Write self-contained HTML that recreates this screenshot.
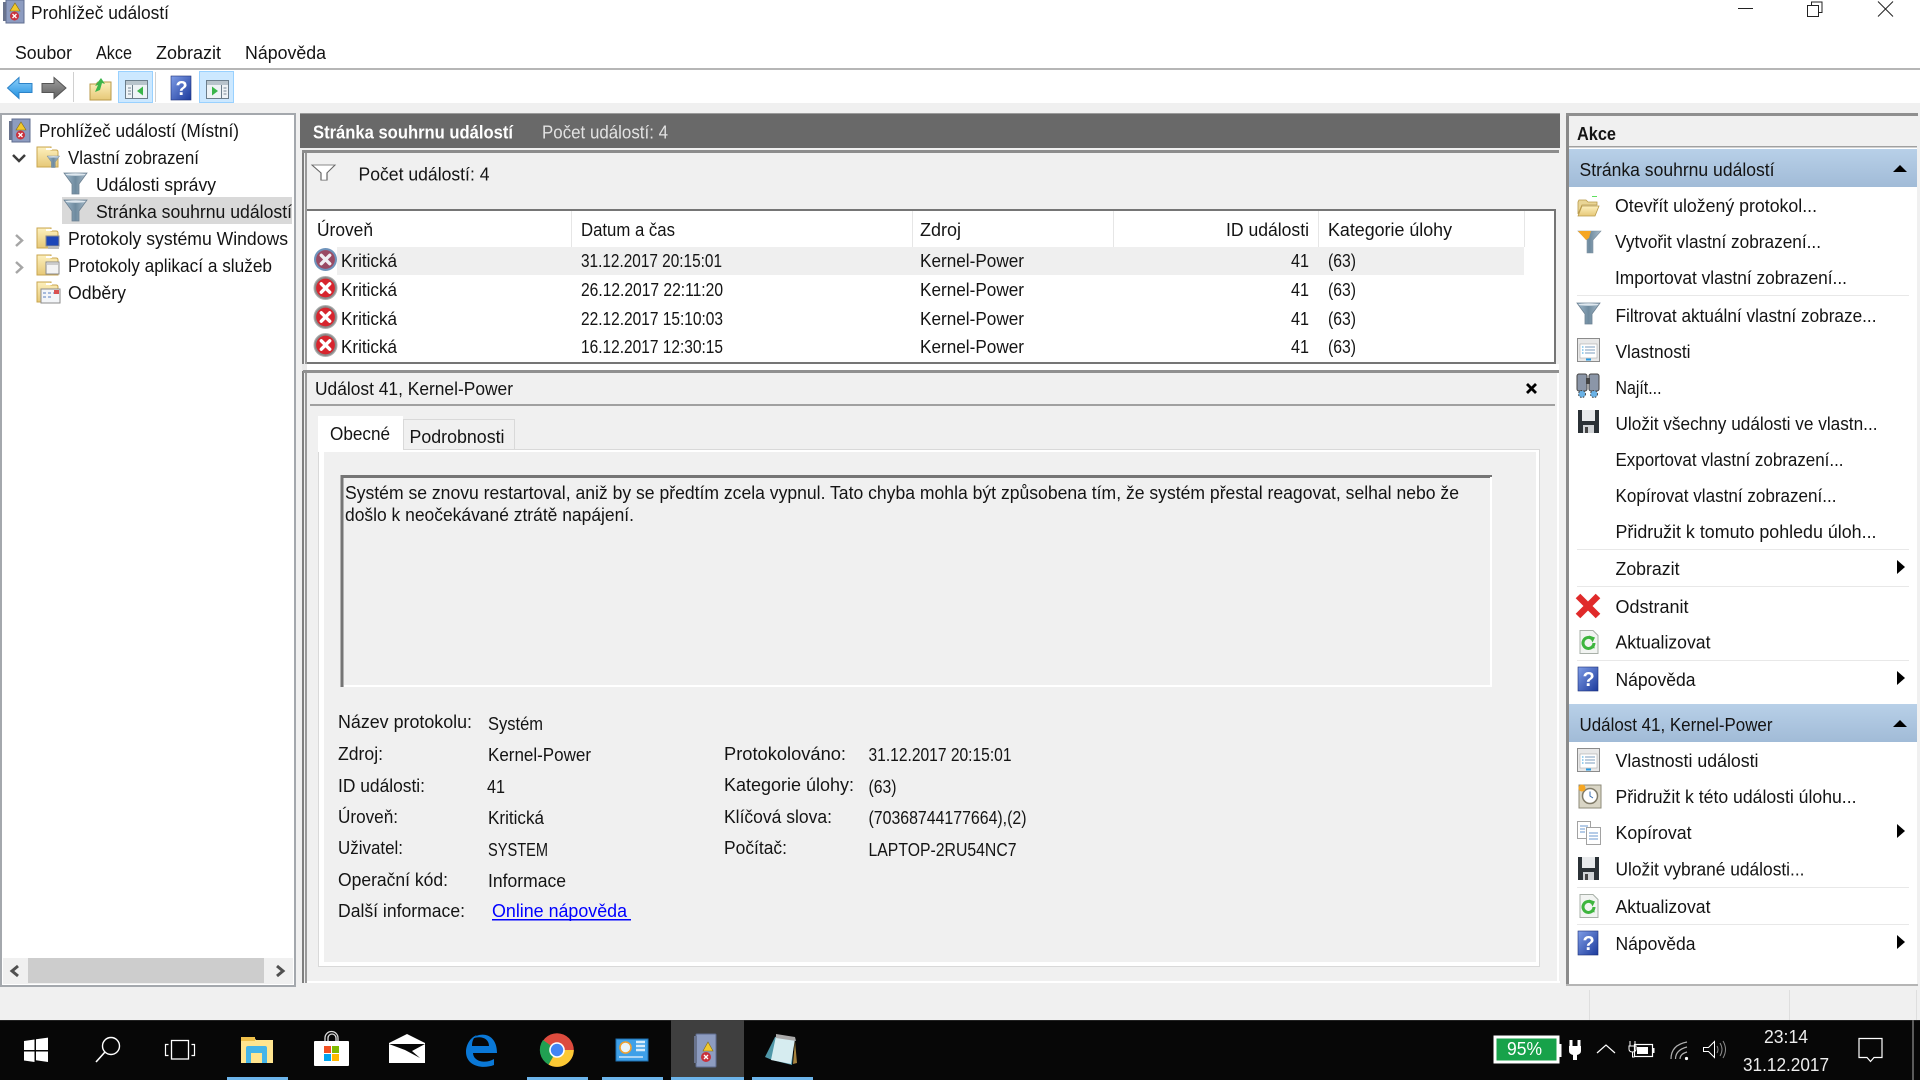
<!DOCTYPE html>
<html lang="cs"><head><meta charset="utf-8"><title>Prohlížeč událostí</title>
<style>
html,body{margin:0;padding:0;background:#f0f0f0;overflow:hidden}
svg{display:block}
text{font-family:"Liberation Sans",sans-serif;font-size:18px;fill:#141414}
.b{font-weight:700}
.w{fill:#fff}
</style></head><body>
<svg xmlns="http://www.w3.org/2000/svg" width="1920" height="1080" viewBox="0 0 1920 1080">
<defs>
<linearGradient id="sec" x1="0" y1="0" x2="0" y2="1"><stop offset="0" stop-color="#b8d0e8"/><stop offset="1" stop-color="#a1bbd7"/></linearGradient>
<linearGradient id="fol" x1="0" y1="0" x2="0" y2="1"><stop offset="0" stop-color="#fdf0bd"/><stop offset="1" stop-color="#e6c877"/></linearGradient>
<linearGradient id="fun" x1="0" y1="0" x2="1" y2="0"><stop offset="0" stop-color="#9fb9cc"/><stop offset=".5" stop-color="#6f8b9f"/><stop offset="1" stop-color="#a8bccb"/></linearGradient>
<linearGradient id="hlp" x1="0" y1="0" x2="1" y2="1"><stop offset="0" stop-color="#7f9de6"/><stop offset="1" stop-color="#1c3a9c"/></linearGradient>
<linearGradient id="arrB" x1="0" y1="0" x2="0" y2="1"><stop offset="0" stop-color="#8fd0fa"/><stop offset="1" stop-color="#1f8fe0"/></linearGradient>
<linearGradient id="arrG" x1="0" y1="0" x2="0" y2="1"><stop offset="0" stop-color="#a0a0a0"/><stop offset="1" stop-color="#5e5e5e"/></linearGradient>
<g id="ev"><rect x="3" y="0" width="18" height="23" fill="#8d9cc0" stroke="#5f6d8f"/><rect x="0" y="2" width="3" height="19" fill="#69738d"/><path d="M12 3l5 8H7z" fill="#f2c92c" stroke="#866d10" stroke-width=".6"/><circle cx="11.500" cy="16" r="4.500" fill="#c9313c"/><path d="M9.500 14l4 4m0-4l-4 4" stroke="#fff" stroke-width="1.300"/></g>
<g id="folder"><path d="M0 4V1h14v3h5q2 0 2 2v15H0z" fill="url(#fol)" stroke="#c9a64f"/><rect x="9" y="2" width="6" height="2" fill="#fff"/></g>
<g id="funnel"><path d="M0 0h23l-8 11v10H8V11z" fill="url(#fun)" stroke="#6d8192" stroke-width=".8"/><ellipse cx="11.500" cy="1.500" rx="10" ry="1.300" fill="#dfe8ef"/></g>
<g id="crit"><circle r="11.500" fill="#8a8a8a"/><circle r="11.500" fill="none" stroke="#b0b0b0" stroke-width="1"/><circle r="9.400" fill="#d7252e"/><path d="M-4.200-4.200L4.200 4.200M4.200-4.200L-4.200 4.200" stroke="#fff" stroke-width="3.400" stroke-linecap="round"/></g>
<g id="critS"><circle r="11.500" fill="#6f93bb"/><circle r="9.400" fill="#9a4a63"/><path d="M-4.200-4.200L4.200 4.200M4.200-4.200L-4.200 4.200" stroke="#f0eef2" stroke-width="3.400" stroke-linecap="round"/></g>
<g id="help"><rect width="20" height="24" fill="url(#hlp)" stroke="#1c2f78" stroke-width=".6"/><text x="4.500" y="19" class="b" style="font-size:20px;fill:#fff">?</text></g>
<g id="save"><path d="M0 0h21v23H0z" fill="#2b3136"/><rect x="4" y="0" width="13" height="11" fill="#e8eaec"/><rect x="5" y="15" width="11" height="8" fill="#d0d3d6"/><rect x="7" y="17" width="3" height="6" fill="#444"/></g>
<g id="props"><rect x=".5" y=".5" width="22" height="23" fill="#e8e8e8" stroke="#8b8b8b"/><rect x="3" y="6" width="17" height="14" fill="#fff" stroke="#aaa" stroke-width=".6"/><path d="M8 9h10M8 12h10M8 15h10" stroke="#7c9cbc"/><path d="M5 9h1.500M5 12h1.500M5 15h1.500" stroke="#32a0e0"/><rect x="9" y="20.500" width="5" height="2" fill="#2a9ae0"/></g>
<g id="refresh"><path d="M.5.5h13l5 5v18H.5z" fill="#f2f4f2" stroke="#a8b0a8"/><path d="M14.500 13a5.500 5.500 0 1 1-2-4.300" fill="none" stroke="#3eb53e" stroke-width="3"/><path d="M10.500 5.500l6 2-2.500 5z" fill="#3eb53e" transform="translate(-1 0)"/><path d="M10 17l5 1.500v-4.500z" fill="#3eb53e"/></g>
<path id="tri" d="M0 7L7 0l7 7z" fill="#000"/>
<path id="ar" d="M0 0l8 7-8 7z" fill="#000"/>
</defs>

<rect width="1920" height="1080" fill="#f0f0f0"/>
<!-- title / menu / toolbar -->
<rect width="1920" height="68" fill="#fff"/>
<rect y="68" width="1920" height="2" fill="#b6b6b6"/>
<rect y="70" width="1920" height="33" fill="#fff"/>
<use href="#ev" x="3" y="0"/>
<text x="31" y="19" textLength="138" lengthAdjust="spacingAndGlyphs">Prohlížeč událostí</text>
<path d="M1738 8.500h15" stroke="#222" stroke-width="1"/>
<path d="M1807.500 5.500h11v11h-11zM1811.500 5.500v-3.500h10.500v10.500h-3.500" fill="none" stroke="#222"/>
<path d="M1878 1.500l15 15M1893 1.500l-15 15" stroke="#222" stroke-width="1"/>
<text x="15" y="59" textLength="57" lengthAdjust="spacingAndGlyphs">Soubor</text>
<text x="96" y="59" textLength="36" lengthAdjust="spacingAndGlyphs">Akce</text>
<text x="156" y="59" textLength="65" lengthAdjust="spacingAndGlyphs">Zobrazit</text>
<text x="245" y="59" textLength="81" lengthAdjust="spacingAndGlyphs">Nápověda</text>

<path d="M7.500 88L19 77.500v6h13v9H19v6z" fill="url(#arrB)" stroke="#2d83c8"/>
<path d="M66 88L54 77.500v6H42v9h12v6z" fill="url(#arrG)" stroke="#555"/>
<rect x="73" y="72" width="1" height="30" fill="#d0d0d0"/>
<rect x="155" y="72" width="1" height="30" fill="#d0d0d0"/>
<path d="M90 84h6l2-2h13v18H90z" fill="url(#fol)" stroke="#b99a4a"/>
<path d="M95 92l3-7-3 1 6-8 4 6-3-1-2 7z" fill="#3bb54a"/>
<rect x="118.500" y="71.500" width="34" height="31" fill="#cce8ff" stroke="#99d1ff"/>
<rect x="125.500" y="80.500" width="22" height="18" fill="#eef3f6" stroke="#6b7d8a"/><rect x="126" y="81" width="21" height="4" fill="#b8c4cc"/><path d="M132.500 85v13" stroke="#6b7d8a"/><path d="M143 86.500v9l-6-4.500z" fill="#3ab54a"/><path d="M128 88h3M128 91h3M128 94h3" stroke="#7a8a96"/>
<use href="#help" x="171" y="76"/>
<rect x="199.500" y="71.500" width="34" height="31" fill="#cce8ff" stroke="#99d1ff"/>
<rect x="206.500" y="80.500" width="22" height="18" fill="#eef3f6" stroke="#6b7d8a"/><rect x="207" y="81" width="21" height="4" fill="#b8c4cc"/><path d="M221.500 85v13" stroke="#6b7d8a"/><path d="M212 86.500v9l6-4.500z" fill="#3ab54a"/><path d="M223.500 88h3M223.500 91h3M223.500 94h3" stroke="#7a8a96"/>

<!-- left panel -->
<rect x="1" y="114" width="294" height="872" fill="#fff" stroke="#a4a8ad" stroke-width="2"/>
<use href="#ev" x="9" y="119"/>
<text x="39" y="137" textLength="200" lengthAdjust="spacingAndGlyphs">Prohlížeč událostí (Místní)</text>
<path d="M13 155l6 6 6-6" fill="none" stroke="#3c3c3c" stroke-width="2.500"/>
<use href="#folder" x="37" y="146"/>
<g transform="translate(47,156) scale(.55)"><use href="#funnel"/></g>
<text x="68" y="164" textLength="131" lengthAdjust="spacingAndGlyphs">Vlastní zobrazení</text>
<use href="#funnel" x="64" y="173"/>
<text x="96" y="191" textLength="120" lengthAdjust="spacingAndGlyphs">Události správy</text>
<rect x="62" y="197" width="230" height="27" fill="#d9d9d9"/>
<use href="#funnel" x="64" y="200"/>
<text x="96" y="218" textLength="196" lengthAdjust="spacingAndGlyphs">Stránka souhrnu událostí</text>
<path d="M16 235l6 5.500-6 5.500" fill="none" stroke="#a6a6a6" stroke-width="2.500"/>
<use href="#folder" x="37" y="227"/>
<rect x="46" y="236" width="13" height="10" fill="#1d46b8" stroke="#8b8b8b"/><rect x="48" y="246" width="11" height="3" fill="#bbb"/>
<text x="68" y="245" textLength="220" lengthAdjust="spacingAndGlyphs">Protokoly systému Windows</text>
<path d="M16 262l6 5.500-6 5.500" fill="none" stroke="#a6a6a6" stroke-width="2.500"/>
<use href="#folder" x="37" y="254"/>
<rect x="46" y="262" width="13" height="12" fill="#f3f3f3" stroke="#8b8b8b"/><rect x="47" y="263" width="11" height="2" fill="#ccc"/>
<text x="68" y="272" textLength="204" lengthAdjust="spacingAndGlyphs">Protokoly aplikací a služeb</text>
<use href="#folder" x="37" y="281"/>
<rect x="41" y="289" width="19" height="14" fill="#f3f5f8" stroke="#8b8b8b"/><path d="M43 293h3M48 293h3M53 293h3M43 297h3M48 297h3" stroke="#5a7ec0"/><rect x="54" y="290" width="5" height="4" fill="#d95050"/>
<text x="68" y="299" textLength="58" lengthAdjust="spacingAndGlyphs">Odběry</text>
<rect x="3" y="958" width="290" height="26" fill="#f0f0f0"/>
<rect x="28" y="958" width="236" height="25" fill="#cdcdcd"/>
<path d="M18 966l-6 5 6 5" fill="none" stroke="#505050" stroke-width="3"/>
<path d="M277 966l6 5-6 5" fill="none" stroke="#505050" stroke-width="3"/>

<!-- center header -->
<rect x="300" y="113" width="1260" height="35" fill="#696969"/>
<rect x="300" y="113" width="1260" height="1" fill="#9a9a9a"/>
<text x="313" y="138.500" textLength="200" lengthAdjust="spacingAndGlyphs" class="b" style="fill:#fff">Stránka souhrnu událostí</text>
<text x="542" y="138.500" textLength="126" lengthAdjust="spacingAndGlyphs" style="fill:#e2e2e2">Počet událostí: 4</text>

<!-- center frames -->
<rect x="302" y="150" width="2" height="833" fill="#7e7e7e"/>
<rect x="305" y="150" width="2" height="833" fill="#9a9a9a"/>
<rect x="302" y="150" width="1257" height="3" fill="#8c8c8c"/>
<rect x="307" y="153" width="1249" height="56" fill="#f0f0f0"/>
<g transform="translate(312,165) scale(1,.72)"><path d="M0 0h23l-8 11v10H9V11z" fill="#fff" stroke="#666" stroke-width="1.200"/></g>
<text x="358.500" y="180.500" textLength="131" lengthAdjust="spacingAndGlyphs">Počet událostí: 4</text>
<rect x="307" y="209" width="1249" height="2" fill="#757575"/>
<rect x="1554" y="209" width="2" height="155" fill="#757575"/>
<rect x="307" y="211" width="1247" height="151" fill="#fff"/>
<path d="M571.500 211v36M912.500 211v36M1113.500 211v36M1318.500 211v36M1524.500 211v36" stroke="#e6e6e6"/>
<text x="317" y="236" textLength="56" lengthAdjust="spacingAndGlyphs">Úroveň</text>
<text x="581" y="236" textLength="94" lengthAdjust="spacingAndGlyphs">Datum a čas</text>
<text x="920" y="236" textLength="41" lengthAdjust="spacingAndGlyphs">Zdroj</text>
<text x="1226" y="236" textLength="83" lengthAdjust="spacingAndGlyphs">ID události</text>
<text x="1328" y="236" textLength="124" lengthAdjust="spacingAndGlyphs">Kategorie úlohy</text>
<rect x="337" y="247" width="1187" height="28" fill="#efefef"/>
<use href="#critS" x="325.500" y="259.500"/><use href="#crit" x="325.500" y="288"/><use href="#crit" x="325.500" y="317"/><use href="#crit" x="325.500" y="345"/>
<text x="341" y="267" textLength="56" lengthAdjust="spacingAndGlyphs">Kritická</text>
<text x="581" y="267" textLength="141" lengthAdjust="spacingAndGlyphs">31.12.2017 20:15:01</text>
<text x="920" y="267" textLength="104" lengthAdjust="spacingAndGlyphs">Kernel-Power</text>
<text x="1291" y="267" textLength="18" lengthAdjust="spacingAndGlyphs">41</text>
<text x="1328" y="267" textLength="28" lengthAdjust="spacingAndGlyphs">(63)</text>
<text x="341" y="296" textLength="56" lengthAdjust="spacingAndGlyphs">Kritická</text>
<text x="581" y="296" textLength="142" lengthAdjust="spacingAndGlyphs">26.12.2017 22:11:20</text>
<text x="920" y="296" textLength="104" lengthAdjust="spacingAndGlyphs">Kernel-Power</text>
<text x="1291" y="296" textLength="18" lengthAdjust="spacingAndGlyphs">41</text>
<text x="1328" y="296" textLength="28" lengthAdjust="spacingAndGlyphs">(63)</text>
<text x="341" y="325" textLength="56" lengthAdjust="spacingAndGlyphs">Kritická</text>
<text x="581" y="325" textLength="142" lengthAdjust="spacingAndGlyphs">22.12.2017 15:10:03</text>
<text x="920" y="325" textLength="104" lengthAdjust="spacingAndGlyphs">Kernel-Power</text>
<text x="1291" y="325" textLength="18" lengthAdjust="spacingAndGlyphs">41</text>
<text x="1328" y="325" textLength="28" lengthAdjust="spacingAndGlyphs">(63)</text>
<text x="341" y="353" textLength="56" lengthAdjust="spacingAndGlyphs">Kritická</text>
<text x="581" y="353" textLength="142" lengthAdjust="spacingAndGlyphs">16.12.2017 12:30:15</text>
<text x="920" y="353" textLength="104" lengthAdjust="spacingAndGlyphs">Kernel-Power</text>
<text x="1291" y="353" textLength="18" lengthAdjust="spacingAndGlyphs">41</text>
<text x="1328" y="353" textLength="28" lengthAdjust="spacingAndGlyphs">(63)</text>
<rect x="307" y="362" width="1249" height="2" fill="#757575"/>
<rect x="302" y="364" width="1257" height="6" fill="#fff"/>
<rect x="302" y="364" width="5" height="7" fill="#e8e8e8"/>
<rect x="303" y="370" width="1256" height="3" fill="#909090"/>

<!-- detail -->
<text x="315" y="395" textLength="198" lengthAdjust="spacingAndGlyphs">Událost 41, Kernel-Power</text>
<path d="M1527 384l9 9M1536 384l-9 9" stroke="#000" stroke-width="2.800"/>
<rect x="310" y="404" width="1245" height="2" fill="#a0a0a0"/>
<rect x="403.500" y="419.500" width="111" height="31" fill="#f0f0f0" stroke="#d9d9d9"/>
<text x="409.500" y="443" textLength="95" lengthAdjust="spacingAndGlyphs">Podrobnosti</text>
<rect x="318.500" y="449.500" width="1221" height="517" fill="#fff" stroke="#d9d9d9"/>
<rect x="318" y="416" width="85" height="36" fill="#fff"/>
<text x="330" y="440" textLength="60" lengthAdjust="spacingAndGlyphs">Obecné</text>
<rect x="324" y="452" width="1212" height="510" fill="#f0f0f0"/>
<rect x="341" y="475" width="1151" height="212" fill="#f0f0f0"/>
<path d="M342 687V476.500H1492" fill="none" stroke="#757575" stroke-width="3"/>
<path d="M1491 477v209H344" fill="none" stroke="#fff" stroke-width="2"/>
<text x="345" y="499" textLength="1114" lengthAdjust="spacingAndGlyphs">Systém se znovu restartoval, aniž by se předtím zcela vypnul. Tato chyba mohla být způsobena tím, že systém přestal reagovat, selhal nebo že</text>
<text x="345" y="521" textLength="289" lengthAdjust="spacingAndGlyphs">došlo k neočekávané ztrátě napájení.</text>

<text x="338" y="728" textLength="134" lengthAdjust="spacingAndGlyphs">Název protokolu:</text>
<text x="338" y="760" textLength="45" lengthAdjust="spacingAndGlyphs">Zdroj:</text>
<text x="338" y="792" textLength="87" lengthAdjust="spacingAndGlyphs">ID události:</text>
<text x="338" y="823" textLength="60" lengthAdjust="spacingAndGlyphs">Úroveň:</text>
<text x="338" y="854" textLength="65" lengthAdjust="spacingAndGlyphs">Uživatel:</text>
<text x="338" y="886" textLength="110" lengthAdjust="spacingAndGlyphs">Operační kód:</text>
<text x="338" y="917" textLength="127" lengthAdjust="spacingAndGlyphs">Další informace:</text>
<text x="488" y="730" textLength="55" lengthAdjust="spacingAndGlyphs">Systém</text>
<text x="488" y="761" textLength="103" lengthAdjust="spacingAndGlyphs">Kernel-Power</text>
<text x="487" y="793" textLength="18" lengthAdjust="spacingAndGlyphs">41</text>
<text x="488" y="824" textLength="56" lengthAdjust="spacingAndGlyphs">Kritická</text>
<text x="488" y="856" textLength="60" lengthAdjust="spacingAndGlyphs">SYSTEM</text>
<text x="488" y="887" textLength="78" lengthAdjust="spacingAndGlyphs">Informace</text>
<text x="492" y="917" textLength="135" lengthAdjust="spacingAndGlyphs" style="fill:#0000ff">Online nápověda</text>
<rect x="492" y="919" width="139" height="1.500" fill="#0000ff"/>
<text x="724" y="760" textLength="122" lengthAdjust="spacingAndGlyphs">Protokolováno:</text>
<text x="724" y="791" textLength="130" lengthAdjust="spacingAndGlyphs">Kategorie úlohy:</text>
<text x="724" y="823" textLength="108" lengthAdjust="spacingAndGlyphs">Klíčová slova:</text>
<text x="724" y="854" textLength="63" lengthAdjust="spacingAndGlyphs">Počítač:</text>
<text x="868.500" y="761" textLength="143" lengthAdjust="spacingAndGlyphs">31.12.2017 20:15:01</text>
<text x="868.500" y="793" textLength="28" lengthAdjust="spacingAndGlyphs">(63)</text>
<text x="868.500" y="824" textLength="158" lengthAdjust="spacingAndGlyphs">(70368744177664),(2)</text>
<text x="868.500" y="856" textLength="148" lengthAdjust="spacingAndGlyphs">LAPTOP-2RU54NC7</text>
<rect x="307" y="981" width="1253" height="2" fill="#fff"/>
<rect x="1557" y="373" width="2" height="608" fill="#fff"/>

<!-- right panel -->
<rect x="1567" y="113" width="350" height="873" fill="#fff"/>
<rect x="1566" y="113" width="3" height="873" fill="#8a8a8a"/>
<rect x="1566" y="113" width="352" height="3" fill="#8f8f8f"/>
<rect x="1569" y="116" width="348" height="30" fill="#f0f0f0"/>
<rect x="1569" y="146" width="348" height="1.500" fill="#a0a0a0"/>
<text x="1577" y="140" textLength="39" lengthAdjust="spacingAndGlyphs" class="b">Akce</text>
<rect x="1569" y="149" width="348" height="38" fill="url(#sec)"/>
<text x="1579.500" y="176" textLength="195" lengthAdjust="spacingAndGlyphs">Stránka souhrnu událostí</text>
<use href="#tri" x="1893" y="165"/>
<path d="M1578 214v-12l1-2h7l2 2h9v3h-15l-4 9z" fill="#e9d596" stroke="#b99a4a" stroke-width=".8"/><path d="M1578 216l4-10h17l-4 10z" fill="url(#fol)" stroke="#b99a4a" stroke-width=".8"/><rect x="1592" y="196" width="5" height="1" fill="#5ee05e"/>
<text x="1615" y="212" textLength="202" lengthAdjust="spacingAndGlyphs">Otevřít uložený protokol...</text>
<g transform="translate(1578,231)"><path d="M0 0h23l-8 9v13H9V9z" fill="url(#fun)" stroke="#7d8f9e" stroke-width=".6"/><path d="M0 0h13l-2 7-3 2z" fill="#f5a623"/></g>
<text x="1615" y="248" textLength="206" lengthAdjust="spacingAndGlyphs">Vytvořit vlastní zobrazení...</text>
<text x="1615" y="284" textLength="232" lengthAdjust="spacingAndGlyphs">Importovat vlastní zobrazení...</text>
<rect x="1577" y="295" width="332" height="1" fill="#e8e8e8"/>
<use href="#funnel" x="1577" y="303"/>
<text x="1615.500" y="322" textLength="261" lengthAdjust="spacingAndGlyphs">Filtrovat aktuální vlastní zobraze...</text>
<use href="#props" x="1577" y="338"/>
<text x="1615.500" y="358" textLength="75" lengthAdjust="spacingAndGlyphs">Vlastnosti</text>
<g transform="translate(1576,374)"><rect x="1" y="0" width="10" height="17" rx="2" fill="#8b96a8" stroke="#444"/><rect x="13" y="0" width="10" height="17" rx="2" fill="#8b96a8" stroke="#444"/><rect x="10" y="4" width="4" height="6" fill="#444"/><circle cx="6" cy="20" r="3.500" fill="#6ab2e6" stroke="#444" stroke-dasharray="1.500 1.500"/><circle cx="18" cy="20" r="3.500" fill="#6ab2e6" stroke="#444" stroke-dasharray="1.500 1.500"/></g>
<text x="1615.500" y="394" textLength="46" lengthAdjust="spacingAndGlyphs">Najít...</text>
<use href="#save" x="1578" y="410"/>
<text x="1615.500" y="430" textLength="262" lengthAdjust="spacingAndGlyphs">Uložit všechny události ve vlastn...</text>
<text x="1615.500" y="466" textLength="228" lengthAdjust="spacingAndGlyphs">Exportovat vlastní zobrazení...</text>
<text x="1615.500" y="502" textLength="221" lengthAdjust="spacingAndGlyphs">Kopírovat vlastní zobrazení...</text>
<text x="1615.500" y="538" textLength="261" lengthAdjust="spacingAndGlyphs">Přidružit k tomuto pohledu úloh...</text>
<rect x="1577" y="549" width="332" height="1" fill="#e8e8e8"/>
<text x="1615.500" y="575" textLength="64" lengthAdjust="spacingAndGlyphs">Zobrazit</text>
<use href="#ar" x="1897" y="560"/>
<rect x="1577" y="586" width="332" height="1" fill="#e8e8e8"/>
<path d="M1578 596l20 20M1598 596l-20 20" stroke="#e02a2a" stroke-width="6.500"/>
<text x="1615.500" y="613" textLength="73" lengthAdjust="spacingAndGlyphs">Odstranit</text>
<use href="#refresh" x="1579.500" y="630"/>
<text x="1615.500" y="648.500" textLength="95" lengthAdjust="spacingAndGlyphs">Aktualizovat</text>
<rect x="1577" y="660" width="332" height="1" fill="#e8e8e8"/>
<use href="#help" x="1578" y="667"/>
<text x="1615.500" y="686" textLength="80" lengthAdjust="spacingAndGlyphs">Nápověda</text>
<use href="#ar" x="1897" y="671"/>
<rect x="1569" y="704" width="348" height="38" fill="url(#sec)"/>
<text x="1579.500" y="731" textLength="193" lengthAdjust="spacingAndGlyphs">Událost 41, Kernel-Power</text>
<use href="#tri" x="1893" y="720"/>
<use href="#props" x="1577" y="748"/>
<text x="1615.500" y="767" textLength="143" lengthAdjust="spacingAndGlyphs">Vlastnosti události</text>
<g transform="translate(1578,784)"><rect x="1" y="1" width="22" height="23" fill="#d9d5c5" stroke="#8d8a78"/><circle cx="12" cy="12" r="7.500" fill="#fff" stroke="#807b68" stroke-width="1.500"/><path d="M12 7.500V12l3 2" fill="none" stroke="#3a6fb0"/><circle cx="4" cy="4" r="3.500" fill="#f5a623"/></g>
<text x="1615.500" y="803" textLength="241" lengthAdjust="spacingAndGlyphs">Přidružit k této události úlohu...</text>
<g transform="translate(1577,821)"><rect x=".5" y=".5" width="13" height="17" fill="#fff" stroke="#a2a2a2"/><rect x="9.500" y="6.500" width="14" height="17" fill="#fff" stroke="#a2a2a2"/><path d="M3 5h8M3 8h5M3 11h5M12 12h9M12 15h9M12 18h9" stroke="#6b9ad0"/></g>
<text x="1615.500" y="839" textLength="76" lengthAdjust="spacingAndGlyphs">Kopírovat</text>
<use href="#ar" x="1897" y="824"/>
<use href="#save" x="1578" y="857"/>
<text x="1615.500" y="875.500" textLength="189" lengthAdjust="spacingAndGlyphs">Uložit vybrané události...</text>
<rect x="1577" y="887" width="332" height="1" fill="#e8e8e8"/>
<use href="#refresh" x="1579.500" y="894"/>
<text x="1615.500" y="913" textLength="95" lengthAdjust="spacingAndGlyphs">Aktualizovat</text>
<rect x="1577" y="924" width="332" height="1" fill="#e8e8e8"/>
<use href="#help" x="1578" y="931"/>
<text x="1615.500" y="950" textLength="80" lengthAdjust="spacingAndGlyphs">Nápověda</text>
<use href="#ar" x="1897" y="935"/>
<rect x="1566" y="984" width="352" height="2" fill="#b5b5b5"/>

<!-- status bar -->
<path d="M1589.500 990v30M1789.500 990v30M1916.500 990v30" stroke="#dedede"/>

<!-- taskbar -->
<rect y="1020" width="1920" height="60" fill="#070707"/>
<rect y="1020" width="1920" height="1" fill="#222"/>
<path d="M24 1041l10.500-1.500v10.500H24zM36 1039.300l12-1.700v12.400H36zM24 1051.500h10.500v10.500L24 1060.500zM36 1051.500h12v10.500L36 1060.300z" fill="#fff"/>
<circle cx="111" cy="1046" r="8.500" fill="none" stroke="#fff" stroke-width="1.400"/><path d="M105 1052l-9 10" stroke="#fff" stroke-width="1.600"/>
<rect x="171.500" y="1040.500" width="17" height="18.500" fill="none" stroke="#fff" stroke-width="1.300"/><path d="M168.500 1044.500h-3v11h3M191.500 1044.500h3v11h-3" fill="none" stroke="#fff" stroke-width="1.200"/>
<path d="M241 1037h13l2 3h17v23h-32z" fill="#ffe58f"/><rect x="241" y="1037" width="14" height="4" fill="#f0c14b"/><path d="M246 1063v-15q0-2 2-2h17q2 0 2 2v15h-5v-10h-11v10z" fill="#45b5e8"/>
<rect x="227" y="1077" width="61" height="3" fill="#6cb4ea"/>
<rect x="314" y="1041" width="35" height="25" rx="1" fill="#fff"/><path d="M325 1041v-3a6.500 6.500 0 0 1 13 0v3M328 1041v-3a4 4 0 0 1 8 0v3" fill="none" stroke="#ddd" stroke-width="1.300"/><rect x="324" y="1046" width="7" height="7" fill="#f25022"/><rect x="332" y="1046" width="7" height="7" fill="#7fba00"/><rect x="324" y="1054" width="7" height="7" fill="#00a4ef"/><rect x="332" y="1054" width="7" height="7" fill="#ffb900"/>
<path d="M389 1043l18-9 18 9v20h-36z" fill="#fff"/><path d="M389 1044h36l-13 7 8 7-15-8z" fill="#070707"/>
<path d="M497 1053h-24c.500 9 13 11 21 6v6c-13 5-28 0-28-13 0-8 5-15 11-17-4 3-5 7-5 11h17c0-8-9-11-17-7 8-8 25-6 25 14z" fill="#0a78d7"/>
<circle cx="557" cy="1050" r="16.800" fill="#dd4b3e"/><path d="M557 1050l-8.400 14.600A16.800 16.800 0 0 1 543 1040z" fill="#21a052"/><path d="M557 1050h16.800a16.800 16.800 0 0 1-25.200 14.600z" fill="#fcc934"/><circle cx="557" cy="1050" r="7.800" fill="#fff"/><circle cx="557" cy="1050" r="6.200" fill="#4285f4"/>
<rect x="527" y="1077" width="61" height="3" fill="#6cb4ea"/>
<rect x="616" y="1039" width="32" height="22" fill="#3fa0e8" stroke="#1c6fb0"/><circle cx="625.500" cy="1047.500" r="5.500" fill="#eaf4fb" stroke="#f0a030" stroke-width="1.600"/><path d="M636 1042h9M636 1046h9M636 1050h9" stroke="#d8ecfa" stroke-width="2.400"/><path d="M619 1057h24" stroke="#cfe6f7" stroke-width="1.500"/>
<rect x="602" y="1077" width="61" height="3" fill="#6cb4ea"/>
<rect x="671" y="1020" width="73" height="57" fill="#3f3f3f"/>
<rect x="671" y="1077" width="73" height="3" fill="#6cb4ea"/>
<g transform="translate(694,1033)"><rect x="2" y="1" width="20" height="33" rx="1" fill="#8d9cc0" stroke="#5f6d8f"/><rect x="0" y="3" width="3" height="27" fill="#69738d"/><path d="M14 9l5 9H9z" fill="#f2c92c" stroke="#866d10" stroke-width=".6"/><circle cx="12" cy="24" r="5" fill="#c9313c"/><path d="M10 22l4 4m0-4l-4 4" stroke="#fff" stroke-width="1.300"/></g>
<path d="M765 1057l10-20 19 2-2 26-20-5z" fill="#4f97a8"/><path d="M776 1036l19 3-4 25-20-4z" fill="#d6ecf0"/><path d="M776 1034l19 3 1 4-20-3z" fill="#aaa"/><path d="M795 1041l2 22-4 1z" fill="#a5823f"/>
<rect x="752" y="1077" width="61" height="3" fill="#6cb4ea"/>

<!-- tray -->
<rect x="1495" y="1037" width="63" height="25" fill="#17a24a" stroke="#fff" stroke-width="3"/>
<rect x="1559" y="1044" width="2.500" height="13" fill="#fff"/>
<text x="1507" y="1055" textLength="35" lengthAdjust="spacingAndGlyphs" style="fill:#fff">95%</text>
<path d="M1571 1040v7M1579 1040v7" stroke="#fff" stroke-width="3"/><path d="M1569 1046h12v5q0 3-4 4v5h-4v-5q-4-1-4-4z" fill="#fff"/>
<path d="M1597 1053l9-8 9 8" fill="none" stroke="#fff" stroke-width="1.200"/>
<rect x="1634.500" y="1044.500" width="18" height="12" fill="none" stroke="#fff" stroke-width="1.200"/><rect x="1637" y="1047" width="11" height="7" fill="#fff"/><rect x="1653" y="1048" width="1.500" height="5" fill="#fff"/><path d="M1630 1046v-5m5 5v-5m-6 5h7v3q0 3-3.500 3t-3.500-3zM1632.500 1052v5h2" fill="none" stroke="#fff"/>
<path d="M1671 1059q0-14 16-17M1675.500 1059q0-9 11.500-12M1680 1059q0-5 7-7" fill="none" stroke="#b0b0b0" stroke-width="1.200"/><circle cx="1686.500" cy="1058.500" r="1.600" fill="#fff"/>
<path d="M1703.500 1047.500h5l6-6v16l-6-6h-5z" fill="none" stroke="#fff"/><path d="M1717 1046q2 3.500 0 7M1720 1043q4 6.500 0 13M1723 1041q5 8.500 0 17" fill="none" stroke="#8c8c8c"/>
<text x="1764" y="1043" textLength="44" lengthAdjust="spacingAndGlyphs" style="fill:#eee">23:14</text>
<text x="1743" y="1071" textLength="86" lengthAdjust="spacingAndGlyphs" style="fill:#eee">31.12.2017</text>
<path d="M1859 1038.500h23v19h-8l-3.500 4-3.500-4h-8z" fill="none" stroke="#fff" stroke-width="1.200"/>
<rect x="1912" y="1020" width="2" height="60" fill="#5a5a5a"/>
</svg>
</body></html>
